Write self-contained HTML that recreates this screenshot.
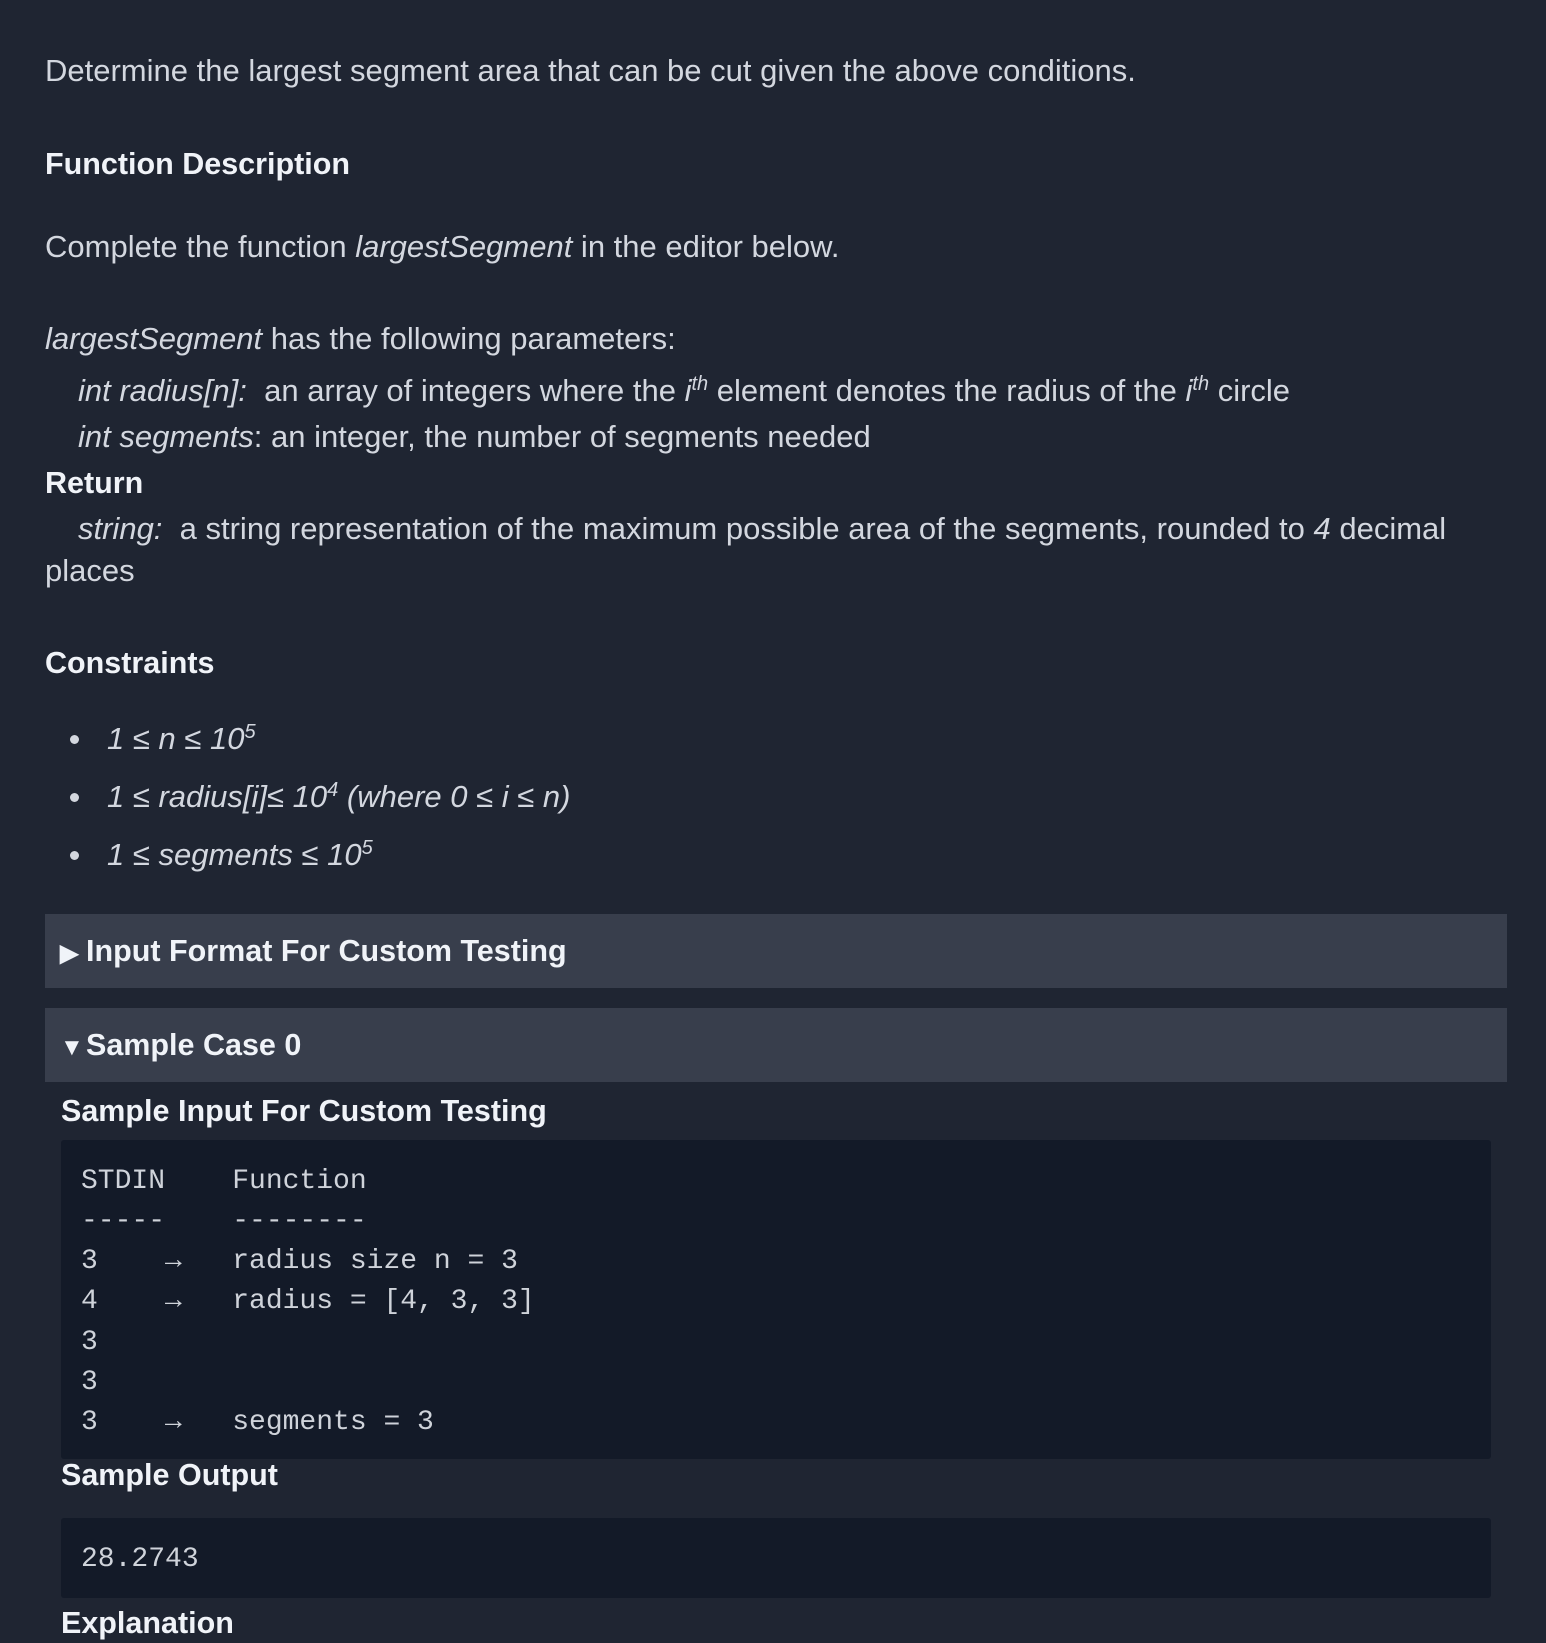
<!DOCTYPE html>
<html><head><meta charset="utf-8"><style>
html,body{margin:0;padding:0;}
body{width:1546px;height:1617px;background:#1f2532;position:relative;overflow:hidden;font-family:"Liberation Sans",sans-serif;color:#d3d7df;}
.l{position:absolute;left:45px;height:40px;line-height:40px;font-size:31px;white-space:nowrap;}
.h{font-weight:bold;color:#f0f3f8;font-size:30.5px;}
i{font-style:italic;}
sup{font-size:20px;vertical-align:11px;line-height:0;}
.bar{position:absolute;left:45px;width:1462px;background:#383e4c;}
.code{position:absolute;left:61px;width:1430px;background:#131a28;border-radius:3px;}
.m{position:absolute;font-family:"Liberation Mono",monospace;font-size:28px;color:#cfd3da;height:40px;line-height:40px;white-space:pre;}
.dot{position:absolute;left:70px;width:9px;height:9px;border-radius:50%;background:#d3d7df;}
.tri{font-size:24px;display:inline-block;width:26px;}
</style></head><body>
<div class="l" style="top:51px">Determine the largest segment area that can be cut given the above conditions.</div>
<div class="l h" style="top:144px">Function Description</div>
<div class="l" style="top:227px">Complete the function <i>largestSegment</i> in the editor below.</div>
<div class="l" style="top:319px"><i>largestSegment</i> has the following parameters:</div>
<div class="l" style="top:371px;left:78px"><i>int radius[n]:</i>&nbsp; an array of integers where the <i>i<sup>th</sup></i> element denotes the radius of the <i>i<sup>th</sup></i> circle</div>
<div class="l" style="top:417px;left:78px"><i>int segments</i>: an integer, the number of segments needed</div>
<div class="l h" style="top:463px">Return</div>
<div class="l" style="top:509px;left:78px"><i>string:</i>&nbsp; a string representation of the maximum possible area of the segments, rounded to <i>4</i> decimal</div>
<div class="l" style="top:551px">places</div>
<div class="l h" style="top:643px">Constraints</div>
<div class="dot" style="top:735px"></div>
<div class="l" style="top:719px;left:107px"><i>1 ≤ n ≤ 10<sup>5</sup></i></div>
<div class="dot" style="top:793px"></div>
<div class="l" style="top:777px;left:107px"><i>1 ≤ radius[i]≤ 10<sup>4</sup> (where 0 ≤ i ≤ n)</i></div>
<div class="dot" style="top:851px"></div>
<div class="l" style="top:835px;left:107px"><i>1 ≤ segments ≤ 10<sup>5</sup></i></div>
<div class="bar" style="top:914px;height:74px"></div>
<div class="l h" style="top:931px;left:60px"><span class="tri">▶</span>Input Format For Custom Testing</div>
<div class="bar" style="top:1008px;height:74px"></div>
<div class="l h" style="top:1025px;left:60px"><span class="tri">▼</span>Sample Case 0</div>
<div class="l h" style="top:1091px;left:61px">Sample Input For Custom Testing</div>
<div class="code" style="top:1140px;height:319px"></div>
<div class="m" style="left:81px;top:1162px">STDIN    Function</div>
<div class="m" style="left:81px;top:1202px">-----    --------</div>
<div class="m" style="left:81px;top:1242px">3    →   radius size n = 3</div>
<div class="m" style="left:81px;top:1282px">4    →   radius = [4, 3, 3]</div>
<div class="m" style="left:81px;top:1323px">3</div>
<div class="m" style="left:81px;top:1363px">3</div>
<div class="m" style="left:81px;top:1403px">3    →   segments = 3</div>
<div class="l h" style="top:1455px;left:61px">Sample Output</div>
<div class="code" style="top:1518px;height:80px"></div>
<div class="m" style="left:81px;top:1540px">28.2743</div>
<div class="l h" style="top:1603px;left:61px">Explanation</div>
</body></html>
